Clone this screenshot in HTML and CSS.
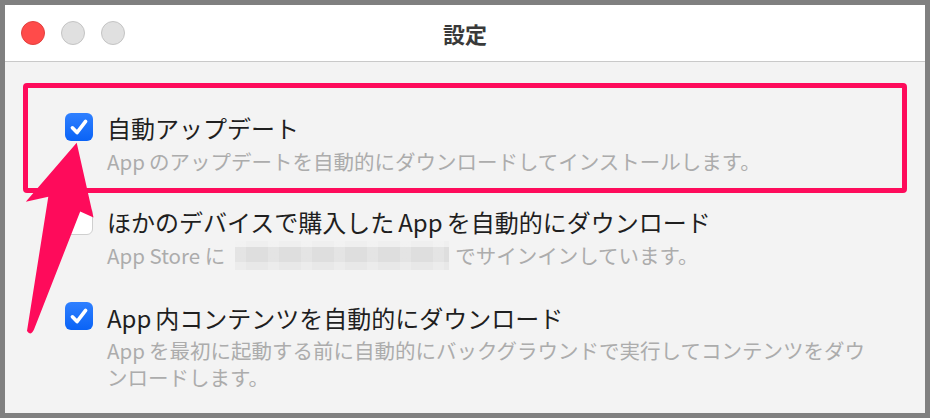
FILE: index.html
```html
<!DOCTYPE html>
<html lang="ja">
<head>
<meta charset="utf-8">
<title>設定</title>
<link rel="stylesheet" href="styles.css">
</head>
<body>
<div class="window">
  <div class="titlebar">
    <div class="lights">
      <span class="light light-close"></span>
      <span class="light light-min"></span>
      <span class="light light-max"></span>
    </div>
    <div class="title">設定</div>
    <div></div>
  </div>
  <div class="content">
    <div class="row">
      <span class="checkbox checked"><svg viewBox="0 0 28 28" width="28" height="28"><path d="M7.4 14.8 L12 19.6 L20.6 8.4" fill="none" stroke="#fff" stroke-width="3.6" stroke-linecap="round" stroke-linejoin="round"/></svg></span>
      <div class="label">自動アップデート</div>
      <div class="sub"><span class="latin">App</span>のアップデートを自動的にダウンロードしてインストールします。</div>
    </div>
    <div class="row">
      <span class="checkbox"></span>
      <div class="label">ほかのデバイスで購入した<span class="latin mid">App</span>を自動的にダウンロード</div>
      <div class="sub">App Store に<span class="blur"></span>でサインインしています。</div>
    </div>
    <div class="row">
      <span class="checkbox checked"><svg viewBox="0 0 28 28" width="28" height="28"><path d="M7.4 14.8 L12 19.6 L20.6 8.4" fill="none" stroke="#fff" stroke-width="3.6" stroke-linecap="round" stroke-linejoin="round"/></svg></span>
      <div class="label"><span class="latin">App</span>内コンテンツを自動的にダウンロード</div>
      <div class="sub"><span class="latin">App</span>を最初に起動する前に自動的にバックグラウンドで実行してコンテンツをダウ<br>ンロードします。</div>
    </div>
  </div>
  <div class="highlight"></div>
  <svg class="arrow" viewBox="5 5 920 408" width="920" height="408">
    <path d="M76.7 142.7 L93.5 217.5 L80.2 211.5 L34 329.5 Q30.5 336.5 27 331 L48.3 196.7 L25.8 201.8 Z" fill="#fe0b5b"/>
  </svg>
</div>
</body>
</html>
```
FILE: styles.css
```css
html, body {
  margin: 0;
  padding: 0;
}
body {
  background: #808080;
  padding: 5px;
  width: 920px;
  height: 408px;
  font-family: "Noto Sans CJK JP", "Noto Sans", sans-serif;
}
.window {
  position: relative;
  width: 920px;
  height: 408px;
  background: #f3f3f3;
  overflow: hidden;
}
.titlebar {
  height: 56px;
  background: #ffffff;
  border-bottom: 1px solid #c9c9c9;
  display: grid;
  grid-template-columns: 1fr auto 1fr;
  align-items: center;
}
.lights {
  display: flex;
  gap: 16px;
  padding-left: 16px;
}
.light {
  width: 24px;
  height: 24px;
  border-radius: 50%;
  box-sizing: border-box;
}
.light-close {
  background: #ff4b4a;
  border: 1px solid #e2403e;
}
.light-min, .light-max {
  background: #e0e0e0;
  border: 1px solid #c4c4c4;
}
.title {
  font-size: 22px;
  font-weight: 700;
  color: #3a3a3a;
  line-height: 28px;
}
.content {
  display: flex;
  flex-direction: column;
  gap: 33.5px;
  padding: 52px 0 0 60px;
}
.row {
  display: grid;
  grid-template-columns: 28px 1fr;
  column-gap: 14px;
}
.checkbox {
  width: 28px;
  height: 28px;
  border-radius: 6px;
  box-sizing: border-box;
  background: #ffffff;
  border: 1px solid #cfcfcf;
  margin-top: -1.5px;
  display: block;
}
.checkbox.checked {
  background: linear-gradient(#2f80ff, #0a63f6);
  border: none;
}
.checkbox svg {
  display: block;
}
.label {
  font-size: 24px;
  line-height: 28px;
  color: #1f1f1f;
}
.latin {
  margin-right: 4px;
}
.latin.mid {
  margin-left: 4px;
}
.sub {
  grid-column: 2;
  margin-top: 5.5px;
  font-size: 20.5px;
  line-height: 27px;
  color: #acacac;
}
.blur {
  display: inline-block;
  vertical-align: middle;
  width: 214px;
  height: 29px;
  margin: -4px 6px 0 10px;
  background:
    repeating-linear-gradient(90deg, rgba(255,255,255,0.18) 0 11px, rgba(255,255,255,0) 11px 33px),
    linear-gradient(#efefef 0 22%, #dedede 22% 72%, #e8e8e8 72% 100%);
}
.highlight {
  position: absolute;
  left: 17.5px;
  top: 78.3px;
  width: 884.5px;
  height: 110px;
  box-sizing: border-box;
  border: 5px solid #fe0b5b;
  border-radius: 4px;
}
.arrow {
  position: absolute;
  left: 0;
  top: 0;
  pointer-events: none;
}
```
